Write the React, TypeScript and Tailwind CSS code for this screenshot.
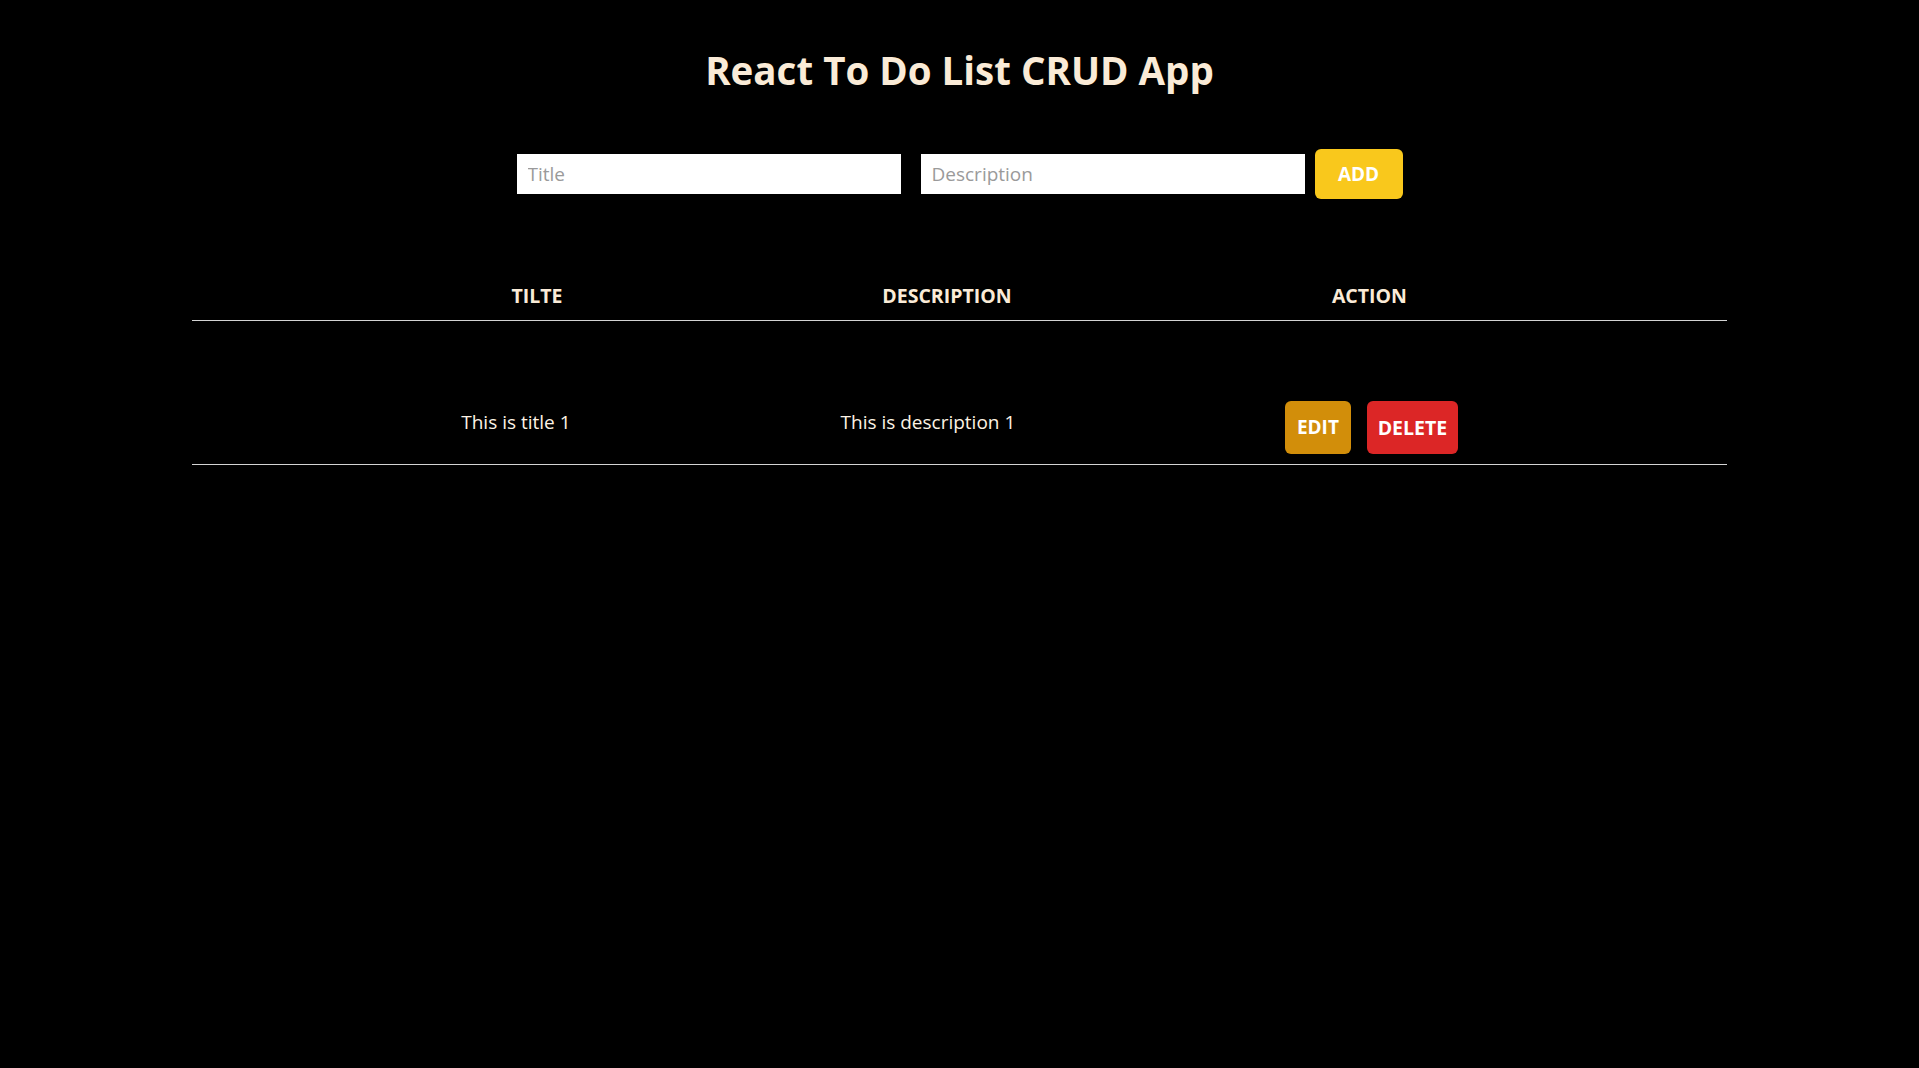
import { useState } from "react";

type Todo = {
  id: number;
  title: string;
  description: string;
};

const font = { fontFamily: '"Open Sans", "Noto Sans", sans-serif' };

export default function App() {
  const [title, setTitle] = useState("");
  const [description, setDescription] = useState("");
  const [todos] = useState<Todo[]>([
    { id: 1, title: "This is title 1", description: "This is description 1" },
  ]);

  return (
    <div className="min-h-screen bg-black text-[#faebd7]" style={font}>
      <h1 className="pt-[45px] text-center text-[38.5px] font-bold leading-[50px]">React To Do List CRUD App</h1>

      <form className="mt-[54px] flex items-center justify-center" onSubmit={(e) => e.preventDefault()}>
        <input
          className="h-10 w-[384px] bg-white px-[11px] text-[19px] text-gray-800 outline-none placeholder:text-[#9a9a9a]"
          placeholder="Title"
          value={title}
          onChange={(e) => setTitle(e.target.value)}
        />
        <input
          className="ml-5 h-10 w-[384px] bg-white px-[11px] text-[19px] text-gray-800 outline-none placeholder:text-[#9a9a9a]"
          placeholder="Description"
          value={description}
          onChange={(e) => setDescription(e.target.value)}
        />
        <button className="ml-[10px] h-[50px] w-[88px] rounded-md bg-[#f9c81c] text-[19px] font-bold text-white">ADD</button>
      </form>

      <div className="mx-auto mt-[83px] w-[80%]">
        <div className="grid grid-cols-[690px_130px_715px] border-b border-[#d4d4d4] pb-[10px] text-center text-[19.5px] font-bold leading-[28px]">
          <div>TILTE</div>
          <div className="whitespace-nowrap">DESCRIPTION</div>
          <div>ACTION</div>
        </div>

        {todos.map((todo) => (
          <div key={todo.id} className="grid grid-cols-[648px_176px_711px] items-start border-b border-[#d4d4d4] pb-[10px] text-center">
            <div className="pt-[87px] text-[19px] leading-[28px] text-[#fdf3e4]">{todo.title}</div>
            <div className="whitespace-nowrap pt-[87px] text-[19px] leading-[28px] text-[#fdf3e4]">{todo.description}</div>
            <div className="flex justify-center gap-4 pt-[80px]">
              <button className="h-[53px] w-[66px] rounded-md bg-[#d28e0a] text-[19px] font-bold text-white">EDIT</button>
              <button className="h-[53px] w-[91px] rounded-md bg-[#dc2626] text-[19.5px] font-bold text-white">DELETE</button>
            </div>
          </div>
        ))}
      </div>
    </div>
  );
}
